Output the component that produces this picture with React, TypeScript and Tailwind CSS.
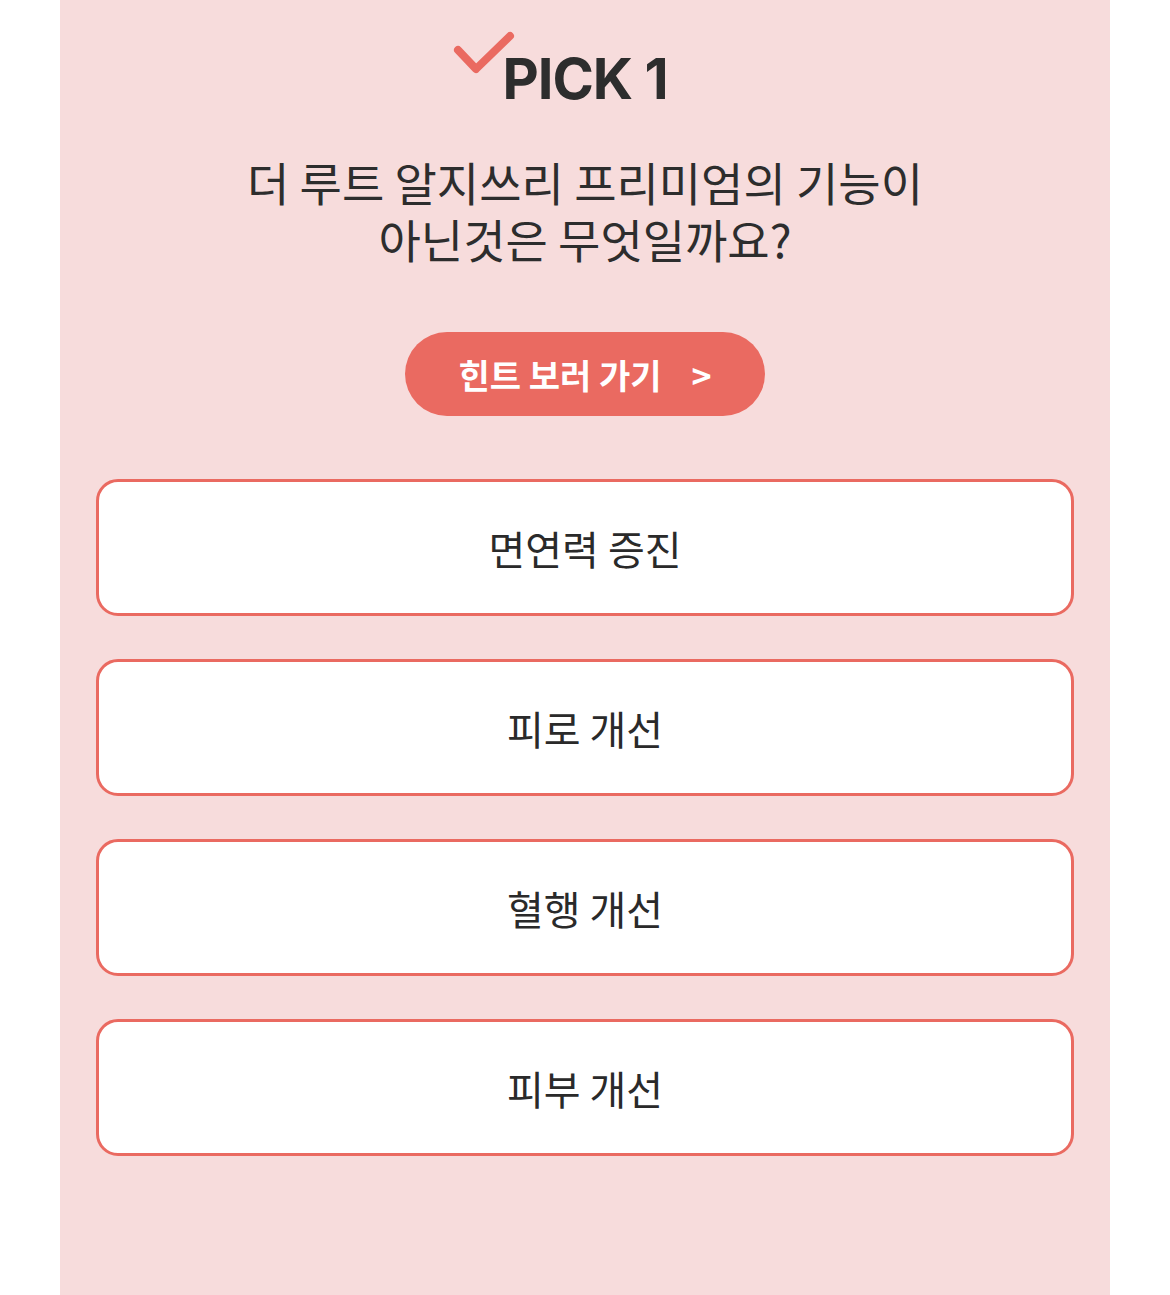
const options = ['면연력 증진', '피로 개선', '혈행 개선', '피부 개선'];

const font = { fontFamily: '"Noto Sans CJK KR", "Noto Sans", sans-serif' };

export default function App() {
  return (
    <div className="min-h-[1295px] bg-white" style={font}>
      <div className="mx-[60px] min-h-[1295px] bg-[#f7dcdc] px-9 pt-[44px]">
        <div className="flex justify-center">
          <div className="relative">
            <svg
              className="absolute left-[-49px] top-[-13px]"
              width="64"
              height="48"
              viewBox="0 0 64 48"
              fill="none"
            >
              <path d="M5 19 L23 38 L57 5" stroke="#ea6a61" strokeWidth="8" strokeLinecap="round" strokeLinejoin="round" />
            </svg>
            <h1
              className="text-[56px] font-bold leading-[70px] tracking-[-1px] text-[#2d2d2d]"
              style={{ fontFamily: 'Inter, "Noto Sans", sans-serif' }}
            >
              PICK 1
            </h1>
          </div>
        </div>

        <p className="mt-[39px] text-center text-[46px] leading-[57px] text-[#2d2d2d]">
          더 루트 알지쓰리 프리미엄의 기능이
          <br />
          아닌것은 무엇일까요?
        </p>

        <div className="mt-[65px] flex justify-center">
          <button className="flex h-[84px] w-[360px] items-center justify-center gap-[30px] rounded-full bg-[#ea6a61] text-[34px] font-bold text-white">
            <span>힌트 보러 가기</span>
            <span>&gt;</span>
          </button>
        </div>

        <div className="mt-[63px] flex flex-col gap-[43px]">
          {options.map((o) => (
            <button
              key={o}
              className="flex h-[137px] items-center justify-center rounded-[22px] border-[3px] border-[#ea6a61] bg-white text-[40px] font-normal text-[#2a2a2a]"
            >
              {o}
            </button>
          ))}
        </div>
      </div>
    </div>
  );
}
